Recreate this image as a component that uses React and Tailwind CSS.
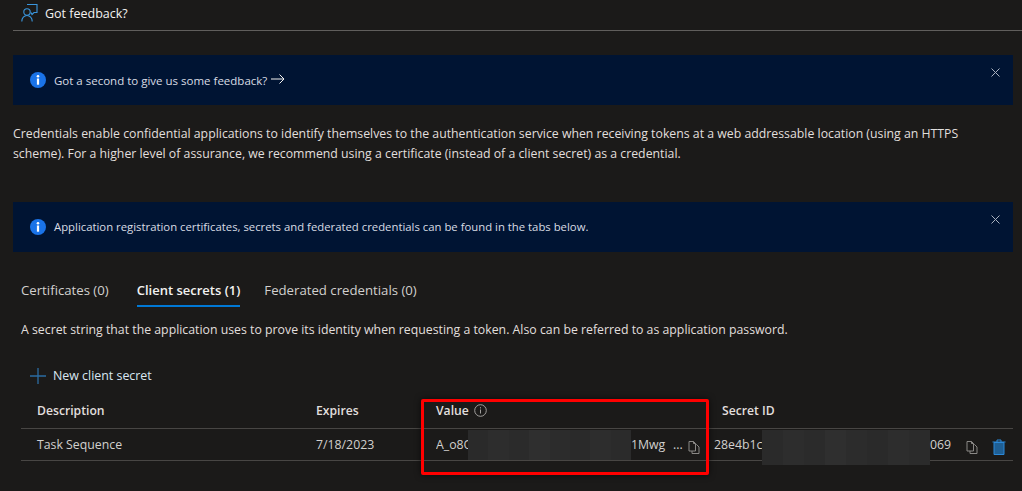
const font = { fontFamily: '"Open Sans", "Noto Sans", sans-serif' };

function InfoIcon() {
  return (
    <svg width="16" height="16" viewBox="0 0 16 16" className="shrink-0">
      <circle cx="8" cy="8" r="8" fill="#1a73e8" />
      <circle cx="8" cy="4.300" r="1.300" fill="#fff" />
      <rect x="6.900" y="6.500" width="2.200" height="6.200" fill="#fff" />
    </svg>
  );
}

function CopyIcon() {
  return (
    <svg width="12" height="13" viewBox="0 0 12 13" fill="none" stroke="#8a8886" strokeWidth="1" className="shrink-0">
      <path d="M1 .5h4.500l2 2v7.500H1z" />
      <path d="M5.500.5v2h2" />
      <path d="M7.500 3.500h1l2.500 2.500v6.500H4v-2.500" />
    </svg>
  );
}

function CloseIcon() {
  return (
    <svg width="9" height="9" viewBox="0 0 9 9" stroke="#a9b1bf" strokeWidth="1">
      <path d="M.5.5l8 8M8.500.5l-8 8" />
    </svg>
  );
}

function Banner({ children, className }) {
  return (
    <div className={"ml-[13px] mr-[9px] h-[50px] bg-[#001433] pl-[17px] pr-[13px] flex items-start justify-between " + className}>
      <div className="flex items-center gap-[8px] h-[50px]">
        <InfoIcon />
        {children}
      </div>
      <div className="pt-[13px] flex">
        <CloseIcon />
      </div>
    </div>
  );
}

// the blurred-out part of a secret, a few slightly different grey blocks
function Redacted({ className }) {
  return (
    <div className={"flex " + className}>
      <div className="flex-[2] bg-[#2a2a2a]"></div>
      <div className="flex-[2] bg-[#2d2d2d]"></div>
      <div className="flex-[2] bg-[#2b2b2b]"></div>
      <div className="flex-[2] bg-[#2f2f2f]"></div>
      <div className="flex-[2] bg-[#2c2c2c]"></div>
      <div className="flex-[2] bg-[#2a2a2a]"></div>
      <div className="flex-[2] bg-[#2d2d2d]"></div>
      <div className="flex-[2] bg-[#2b2b2b]"></div>
    </div>
  );
}

export default function App() {
  return (
    <div className="relative w-[1022px] h-[491px] overflow-hidden bg-[#1b1a19] text-[#e6e6e6] text-[12px]" style={font}>
      <div className="ml-[13px] h-[31px] border-b border-[#605e5c] flex items-center pl-[8px] gap-[7px] pb-[4px]">
        <svg width="17" height="20" viewBox="0 0 17 20" fill="none" stroke="#3a96dd" strokeWidth="1.100">
          <path d="M6 1.500h10v8h-3l-2 2-1-2" />
          <circle cx="6" cy="9" r="3.200" />
          <path d="M.8 18.500c0-3.500 2.300-6 5.200-6s5.200 2.500 5.200 6" />
        </svg>
        <span className="mt-[2px] text-[12.500px] text-[#f3f2f1]">Got feedback?</span>
      </div>

      <Banner className="mt-[24px]">
        <span className="mt-[2px] text-[11.500px] text-[#d8dce4]">Got a second to give us some feedback?</span>
        <svg width="14" height="10" viewBox="0 0 14 10" fill="none" stroke="#f3f2f1" strokeWidth="1" className="-ml-[4px] -mt-[2px]">
          <path d="M0 5h13M8.500.5L13 5 8.500 9.500" />
        </svg>
      </Banner>

      <p className="ml-[13px] mr-[40px] mt-[19px] text-[12.300px] leading-[20px] text-[#e1dfdd]">
        Credentials enable confidential applications to identify themselves to the authentication service when receiving tokens at a web addressable location (using an HTTPS scheme). For a higher level of assurance, we recommend using a certificate (instead of a client secret) as a credential.
      </p>

      <Banner className="mt-[38px]">
        <span className="text-[11.330px] text-[#d8dce4]">Application registration certificates, secrets and federated credentials can be found in the tabs below.</span>
      </Banner>

      <div className="ml-[21px] mt-[29px] flex text-[13.200px] text-[#d2d0ce]">
        <span className="h-[26px] mr-[28px]">Certificates (0)</span>
        <span className="h-[26px] mr-[24px] text-[13px] font-semibold text-[#f3f2f1] border-b-2 border-[#0078d4]">Client secrets (1)</span>
        <span className="h-[26px]">Federated credentials (0)</span>
      </div>

      <p className="ml-[21px] mt-[14px] text-[12.300px] leading-[18px] text-[#e1dfdd]">
        A secret string that the application uses to prove its identity when requesting a token. Also can be referred to as application password.
      </p>

      <div className="ml-[30px] mt-[27px] h-[20px] flex items-center gap-[7px] text-[12.400px] text-[#d9e6f2]">
        <svg width="16" height="16" viewBox="0 0 16 16" stroke="#2b6ca3" strokeWidth="1.300">
          <path d="M8 0v16M0 8h16" />
        </svg>
        New client secret
      </div>

      <div className="ml-[21px] mr-[9px] mt-[14px]">
        <div className="h-[29px] pb-[6px] border-b border-[#484644] grid grid-cols-[295px_120px_286px_1fr] items-center font-semibold text-[12.200px] text-[#e1dfdd]">
          <span className="pl-[16px]">Description</span>
          <span>Expires</span>
          <span className="flex items-center gap-[5px]">
            Value
            <svg width="13" height="13" viewBox="0 0 13 13" fill="none" stroke="#a19f9d" strokeWidth="1">
              <circle cx="6.500" cy="6.500" r="5.800" />
              <path d="M6.500 5.500v4M6.500 3.200v1.200" />
            </svg>
          </span>
          <span>Secret ID</span>
        </div>
        <div className="h-[32px] border-b border-[#484644] grid grid-cols-[295px_120px_278px_1fr] items-center text-[12.300px] text-[#d2d0ce]">
          <span className="pl-[16px] pb-[4px]">Task Sequence</span>
          <span className="pb-[4px]">7/18/2023</span>
          <div className="flex items-center h-full">
            <span className="w-[32px] pb-[4px] overflow-hidden whitespace-nowrap">A_o8Q</span>
            <Redacted className="w-[163px] h-[30px] self-start mt-[1px]" />
            <span className="w-[41px] pb-[4px]">1Mwg</span>
            <span className="w-[14px] pb-[4px] pl-[1px]">...</span>
            <div className="flex ml-[2px]"><CopyIcon /></div>
          </div>
          <div className="flex items-center h-full">
            <span className="w-[48px] pb-[4px] whitespace-nowrap">28e4b1c</span>
            <Redacted className="w-[168px] h-[35px] self-start mt-[1px]" />
            <span className="w-[36px] pb-[4px]">069</span>
            <div className="flex"><CopyIcon /></div>
            <svg width="14" height="16" viewBox="0 0 14 16" className="ml-[14px]" fill="#1f5f94" stroke="#2b88d8" strokeWidth="1">
              <path d="M2 3.500h10v12H2z" />
              <path d="M.5 3h13M5 3V1h4v2" fill="none" />
            </svg>
          </div>
        </div>
      </div>

      {/* red box the screenshot was annotated with */}
      <div className="absolute left-[421px] top-[399px] w-[288px] h-[76px] border-[3px] border-[#ff0000] rounded-[2px] shadow-[0_0_6px_rgba(0,0,0,0.6)]"></div>
    </div>
  );
}
